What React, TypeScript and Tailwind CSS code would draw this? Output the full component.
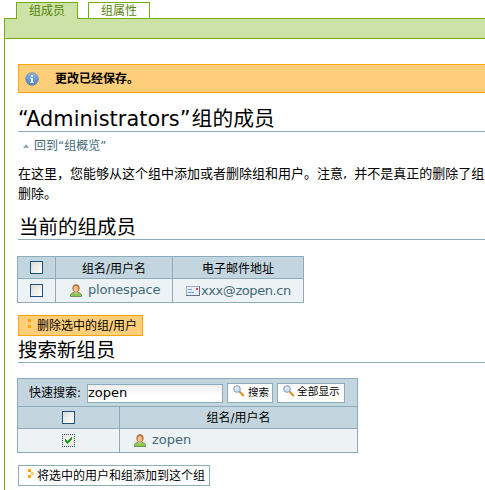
import React from 'react';

function UserIcon() {
  return (
    <svg width="12" height="13" viewBox="0 0 12 13" className="shrink-0">
      <path d="M0.5 12.5V10.5L2.5 8.8L6 8L9.5 8.8L11.5 10.5V12.5Z" fill="#8cc850" stroke="#5c8440" strokeWidth="0.8" />
      <path d="M4.3 8.4L6 10L7.7 8.4V6.5H4.3Z" fill="#f3d0a0" />
      <ellipse cx="6" cy="4.3" rx="3.3" ry="3.8" fill="#b5783c" stroke="#94602c" strokeWidth="0.6" />
      <ellipse cx="5.9" cy="4.9" rx="2.3" ry="2.8" fill="#f3bd84" />
    </svg>
  );
}

function InfoIcon() {
  return (
    <svg width="14" height="14" viewBox="0 0 14 14" className="shrink-0">
      <defs>
        <linearGradient id="info" x1="0" y1="0" x2="0" y2="1">
          <stop offset="0" stopColor="#8fb9e8" />
          <stop offset="1" stopColor="#3f7dca" />
        </linearGradient>
      </defs>
      <circle cx="7" cy="7" r="6.3" fill="url(#info)" stroke="#8a8f9a" strokeWidth="1" />
      <path d="M6 3H8V4.6H6ZM5.2 5.7H8V10H9V11H5V10H6V6.7H5.2Z" fill="#fff" />
    </svg>
  );
}

function MailIcon() {
  return (
    <svg width="14" height="10" viewBox="0 0 14 10" className="shrink-0">
      <rect x="0.5" y="0.5" width="13" height="9" fill="#e3effc" stroke="#a3a9b8" />
      <path d="M0 9.5H14M13.5 0V10" stroke="#66718a" />
      <path d="M2 3.5H6M2 6.5H8" stroke="#6da5ec" />
      <rect x="10" y="2" width="2" height="2" fill="#f0442a" />
    </svg>
  );
}

function Magnifier() {
  return (
    <svg width="12" height="12" viewBox="0 0 12 12" className="-mt-1 shrink-0">
      <path d="M6.5 6.5L10.8 11" stroke="#e08a22" strokeWidth="2" />
      <circle cx="4" cy="4" r="3.3" fill="#cfe4fa" stroke="#8795ad" strokeWidth="1" />
      <path d="M2.3 4A2 2 0 0 1 4 2.2" stroke="#fff" fill="none" />
    </svg>
  );
}

function Check({ checked = false }: { checked?: boolean }) {
  return (
    <span
      className={
        checked
          ? 'block size-[13px] shrink-0 border border-dotted border-[#1c5180] bg-[#f3e6d8]'
          : 'block size-[13px] shrink-0 border border-[#1c5180] bg-linear-to-br from-[#dcdcd7] to-white'
      }
    >
      {checked && (
        <svg width="11" height="11" viewBox="0 0 11 11" className="block" shapeRendering="crispEdges">
          <rect x="1" y="1" width="9" height="9" fill="#f0f0ec" />
          <path d="M2 4h1v1h1v1h1v-1h1v-1h1v-1h1v-1h1v3h-1v1h-1v1h-1v1h-1v1h-1v-1h-1v-1h-1z" fill="#21a121" />
        </svg>
      )}
    </span>
  );
}

export default function App() {
  return (
    <div className="h-[490px] w-[485px] overflow-hidden bg-white pl-1 pt-[2px] font-['DejaVu_Sans','Noto_Sans_CJK_SC',sans-serif] text-[13px] text-black">
      <div className="relative z-10 -mb-px flex gap-[10px] pl-3 text-[12px] text-[#578308]">
        <div className="flex h-[17px] w-[62px] justify-center border border-b-0 border-[#74ae0b] bg-[#cde2a7] leading-[16px]">组成员</div>
        <div className="flex h-[17px] w-[62px] justify-center border border-[#74ae0b] bg-white leading-[16px]">组属性</div>
      </div>
      <div className="h-[21px] border-y border-l border-[#74ae0b] bg-[#cde2a7]" />
      <div className="h-[451px] border-l border-[#74ae0b] pl-[13px] pt-[25px]">
        <div className="flex h-[29px] items-center border-y border-l border-[#ffa500] bg-[#ffce7b] pl-[6px]">
          <InfoIcon />
          <b className="ml-4 text-[12px] leading-none">更改已经保存。</b>
        </div>
        <h1 className="mt-[10px] h-[29px] whitespace-nowrap border-b border-[#8cacbb] text-[20.8px] leading-[33px]">
          <span className="mr-px tracking-[0.07px]">“Administrators”</span>组的成员
        </h1>
        <div className="flex h-[27px] items-center gap-[5px] pl-[5px] text-[12px] text-[#436976]">
          <span className="size-0 border-x-[3.5px] border-b-4 border-x-transparent border-b-[#8cacbb]" />
          <span>回到“组概览”</span>
        </div>
        <p className="mt-[5px] h-[40px] whitespace-nowrap text-[13px] leading-5">
          在这里，您能够从这个组中添加或者删除组和用户。注意<span className="mr-[7px]">,</span>并不是真正的删除了组或
          <br />
          删除。
        </p>
        <h2 className="mt-[7px] h-[29px] border-b border-[#8cacbb] pl-px text-[19.5px] leading-[34px]">当前的组成员</h2>

        <div className="-ml-px mt-4 grid h-[47px] w-[287px] grid-cols-[37px_116px_130px] grid-rows-[21px_23px] gap-px border border-[#8cacbb] bg-[#8cacbb] text-[12px]">
          <div className="flex items-center justify-center bg-[#c3d5df]"><Check /></div>
          <div className="flex items-center justify-center bg-[#c3d5df] pt-0.5">组名/用户名</div>
          <div className="flex items-center justify-center bg-[#c3d5df] pt-0.5">电子邮件地址</div>
          <div className="flex items-center justify-center bg-[#edf2f5]"><Check /></div>
          <div className="flex items-center gap-[6px] bg-[#edf2f5] pl-[14px] text-[13px] text-[#436976]">
            <UserIcon /><span className="-mt-px tracking-[-0.2px]">plonespace</span>
          </div>
          <div className="flex items-center gap-px bg-[#edf2f5] pl-[13px] text-[13px] text-[#436976]">
            <MailIcon /><span className="tracking-[-0.42px]">xxx@zopen.cn</span>
          </div>
        </div>

        <div className="mt-3 flex h-[21px] w-[125px] items-center border border-[#ffa500] bg-[#ffce7b] pl-[9px] text-[12px] leading-none">
          <svg width="3" height="9" className="mr-[6px] mt-[-4px] shrink-0"><path d="M0 0H3V3H0ZM0 6H3V9H0Z" fill="#ffa500" /></svg>
          <span className="whitespace-nowrap">删除选中的组/用户</span>
        </div>
        <h2 className="h-[27px] border-b border-[#8cacbb] text-[19.5px] leading-[30px]">搜索新组员</h2>

        <div className="-ml-px mt-[15px] grid h-[75px] w-[341px] grid-cols-[101px_237px] grid-rows-[27px_21px_23px] gap-px border border-[#8cacbb] bg-[#8cacbb] text-[12px]">
          <div className="col-span-2 flex items-center bg-[#c3d5df] pl-[11px]">
            <span className="w-[58px] whitespace-nowrap">快速搜索:</span>
            <div className="mt-px flex h-[19px] w-[136px] items-center border border-[#8cacbb] bg-linear-to-b from-[#eeeeee] to-white to-60% text-[13px]">zopen</div>
            <div className="ml-1 flex h-5 w-[46px] items-center gap-[3px] border border-[#8cacbb] bg-white pl-[5px] text-[10.5px]">
              <Magnifier /><span className="whitespace-nowrap">搜索</span>
            </div>
            <div className="ml-1 flex h-5 w-[68px] items-center gap-[2px] border border-[#8cacbb] bg-white pl-[5px] text-[10.7px]">
              <Magnifier /><span className="whitespace-nowrap">全部显示</span>
            </div>
          </div>
          <div className="flex items-center justify-center bg-[#c3d5df]"><Check /></div>
          <div className="flex items-center justify-center bg-[#c3d5df]">组名/用户名</div>
          <div className="flex items-center justify-center bg-[#edf2f5]"><Check checked /></div>
          <div className="flex items-center gap-[6px] bg-[#edf2f5] pl-[14px] text-[13px] text-[#436976]">
            <UserIcon /><span className="-mt-px">zopen</span>
          </div>
        </div>

        <div className="mt-3 flex h-[21px] w-[192px] items-center border border-[#8cacbb] bg-white pl-[9px] text-[12px] leading-none">
          <svg width="6" height="9" className="mr-[3px] mt-[-4px] shrink-0">
            <path d="M0 0H3V3H0ZM0 6H3V9H0Z" fill="#ffa500" />
            <path d="M3 3H6V6H3Z" fill="#ffce7b" />
          </svg>
          <span className="whitespace-nowrap">将选中的用户和组添加到这个组</span>
        </div>
      </div>
    </div>
  );
}
